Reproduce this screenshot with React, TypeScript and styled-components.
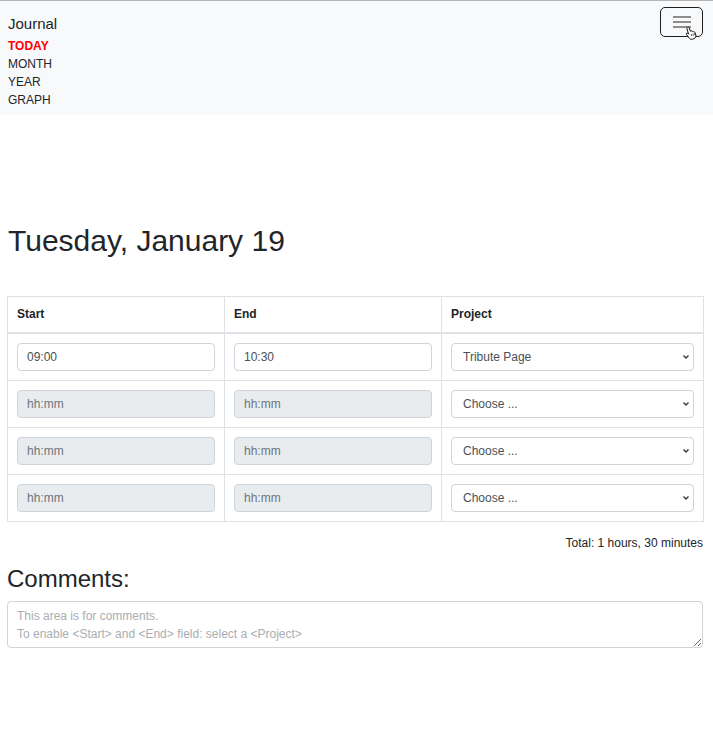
import React from "react";
import styled, { createGlobalStyle } from "styled-components";

const GlobalStyle = createGlobalStyle`
  html, body { margin: 0; padding: 0; background: #fff; }
  body {
    font-family: "Liberation Sans", Arial, sans-serif;
    font-size: 12px;
    line-height: 18px;
    color: #212529;
    border-top: 1px solid #b4b4b4;
  }
  * { box-sizing: border-box; }
`;

const NavBar = styled.nav`
  background: #f8f9fa;
  display: flex;
  flex-wrap: wrap;
  align-items: center;
  justify-content: space-between;
  padding: 8px 10px 6px 8px;
`;

const Brand = styled.a`
  font-size: 15px;
  line-height: 27px;
  color: #212529;
  text-decoration: none;
`;

const Toggler = styled.button`
  position: relative;
  width: 43px;
  height: 30px;
  margin-top: -2px;
  background: transparent;
  border: 1.5px solid #1f1f1f;
  border-radius: 5px;
  padding: 0;
  display: flex;
  align-items: center;
  justify-content: center;
`;

const Cursor = styled.svg`
  position: absolute;
  left: 23px;
  top: 18px;
`;

const NavList = styled.ul`
  flex-basis: 100%;
  list-style: none;
  margin: 0;
  padding: 0;
`;

const NavItem = styled.li<{ $active?: boolean }>`
  font-size: 12px;
  line-height: 18px;
  color: ${(p) => (p.$active ? "#ff0000" : "#212529")};
  font-weight: ${(p) => (p.$active ? 700 : 400)};
`;

const Main = styled.main`
  padding: 108px 10px 40px 7px;
`;

const Title = styled.h1`
  font-weight: 400;
  font-size: 30px;
  line-height: 36px;
  margin: 0 0 37px 1px;
`;

const Table = styled.table`
  width: 100%;
  border-collapse: collapse;
  table-layout: fixed;
`;

const HeadCell = styled.th<{ $w: number }>`
  width: ${(p) => p.$w}px;
  text-align: left;
  font-weight: 700;
  font-size: 12px;
  line-height: 17px;
  padding: 9px 9px;
  border: 1px solid #dee2e6;
  border-bottom-width: 2px;
`;

const Cell = styled.td`
  padding: 9px 9px;
  border: 1px solid #dee2e6;
`;

const TimeInput = styled.input`
  display: block;
  width: 100%;
  height: 28px;
  padding: 0 9px;
  font-family: inherit;
  font-size: 12px;
  color: #495057;
  background: #fff;
  border: 1px solid #ced4da;
  border-radius: 4px;
  &:disabled { background: #e9ecef; }
  &::placeholder { color: #6c757d; opacity: 1; }
`;

const SelectWrap = styled.div`
  position: relative;
`;

const Select = styled.select`
  display: block;
  width: 100%;
  height: 28px;
  padding: 0 24px 0 11px;
  font-family: inherit;
  font-size: 12px;
  color: #495057;
  background: #fff;
  border: 1px solid #ced4da;
  border-radius: 4px;
  appearance: none;
  -webkit-appearance: none;
`;

const Chevron = styled.svg`
  position: absolute;
  right: 4px;
  top: 11px;
  pointer-events: none;
`;

const Total = styled.div`
  text-align: right;
  font-size: 12px;
  line-height: 18px;
  margin-top: 12px;
`;

const SubTitle = styled.h2`
  font-weight: 400;
  font-size: 24px;
  line-height: 29px;
  margin: 12px 0 8px 0;
`;

const Comments = styled.textarea`
  display: block;
  width: 100%;
  height: 47px;
  padding: 5px 9px 4px;
  font-family: inherit;
  font-size: 12px;
  line-height: 18px;
  color: #495057;
  border: 1px solid #ced4da;
  border-radius: 4px;
  &::placeholder { color: #a9adb1; opacity: 1; }
`;

const rows = [
  { start: "09:00", end: "10:30", project: "Tribute Page", enabled: true },
  { start: "", end: "", project: "Choose ...", enabled: false },
  { start: "", end: "", project: "Choose ...", enabled: false },
  { start: "", end: "", project: "Choose ...", enabled: false },
];

export default function App() {
  return (
    <>
      <GlobalStyle />
      <NavBar>
        <Brand href="#">Journal</Brand>
        <Toggler aria-label="Toggle navigation">
          <svg width="20" height="14" viewBox="0 0 20 14">
            <path d="M1 2h18M1 7h18M1 12h18" stroke="#6b6b6b" strokeWidth="1.6" />
          </svg>
          <Cursor width="14" height="14" viewBox="0 0 14 14">
            <path
              d="M3.5 1.2c.7-.4 1.4 0 1.6.6l1.3 3.4.6-.3c.6-.2 1.1.1 1.3.5.5-.3 1.1-.1 1.3.4.6-.2 1.1.1 1.3.6l.9 2.6c.5 1.5-.2 3-1.7 3.6l-1.6.6c-1.2.4-2.5 0-3.2-1L2.4 8.3c-.3-.5-.1-1 .4-1.2.5-.2.9 0 1.2.3l.6.8L2.9 2.6c-.2-.6 0-1.1.6-1.4z"
              fill="#fff"
              stroke="#111"
              strokeWidth="1"
            />
            <path d="M7.2 8.2l.6 1.8M8.9 7.7l.6 1.8M10.5 7.3l.6 1.7" stroke="#111" strokeWidth="0.8" />
          </Cursor>
        </Toggler>
        <NavList>
          <NavItem $active>TODAY</NavItem>
          <NavItem>MONTH</NavItem>
          <NavItem>YEAR</NavItem>
          <NavItem>GRAPH</NavItem>
        </NavList>
      </NavBar>
      <Main>
        <Title>Tuesday, January 19</Title>
        <Table>
          <thead>
            <tr>
              <HeadCell $w={217}>Start</HeadCell>
              <HeadCell $w={217}>End</HeadCell>
              <HeadCell $w={262}>Project</HeadCell>
            </tr>
          </thead>
          <tbody>
            {rows.map((r, i) => (
              <tr key={i}>
                <Cell>
                  <TimeInput
                    defaultValue={r.start}
                    placeholder="hh:mm"
                    disabled={!r.enabled}
                  />
                </Cell>
                <Cell>
                  <TimeInput
                    defaultValue={r.end}
                    placeholder="hh:mm"
                    disabled={!r.enabled}
                  />
                </Cell>
                <Cell>
                  <SelectWrap>
                    <Select defaultValue={r.project}>
                      <option>Choose ...</option>
                      <option>Tribute Page</option>
                    </Select>
                    <Chevron width="8" height="6" viewBox="0 0 8 6">
                      <path d="M1.5 1.5l2.5 2.5 2.5-2.5" fill="none" stroke="#343a40" strokeWidth="1.4" />
                    </Chevron>
                  </SelectWrap>
                </Cell>
              </tr>
            ))}
          </tbody>
        </Table>
        <Total>Total: 1 hours, 30 minutes</Total>
        <SubTitle>Comments:</SubTitle>
        <Comments
          placeholder={"This area is for comments.\nTo enable <Start> and <End> field: select a <Project>"}
        />
      </Main>
    </>
  );
}
